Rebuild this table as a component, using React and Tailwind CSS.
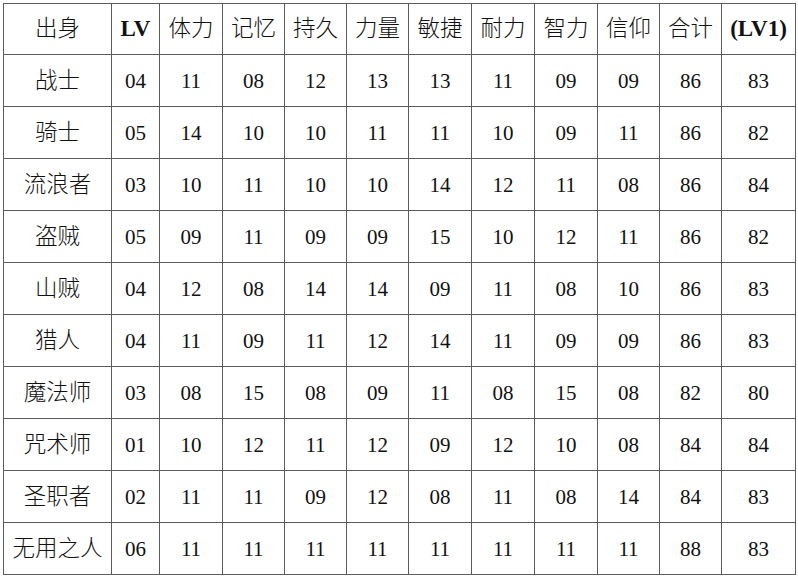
import React from "react";

const headers = ["出身", "LV", "体力", "记忆", "持久", "力量", "敏捷", "耐力", "智力", "信仰", "合计", "(LV1)"];

const rows = [
  ["战士", "04", "11", "08", "12", "13", "13", "11", "09", "09", "86", "83"],
  ["骑士", "05", "14", "10", "10", "11", "11", "10", "09", "11", "86", "82"],
  ["流浪者", "03", "10", "11", "10", "10", "14", "12", "11", "08", "86", "84"],
  ["盗贼", "05", "09", "11", "09", "09", "15", "10", "12", "11", "86", "82"],
  ["山贼", "04", "12", "08", "14", "14", "09", "11", "08", "10", "86", "83"],
  ["猎人", "04", "11", "09", "11", "12", "14", "11", "09", "09", "86", "83"],
  ["魔法师", "03", "08", "15", "08", "09", "11", "08", "15", "08", "82", "80"],
  ["咒术师", "01", "10", "12", "11", "12", "09", "12", "10", "08", "84", "84"],
  ["圣职者", "02", "11", "11", "09", "12", "08", "11", "08", "14", "84", "83"],
  ["无用之人", "06", "11", "11", "11", "11", "11", "11", "11", "11", "88", "83"],
];

const cols = "grid-cols-[108px_48px_63px_62px_62px_62px_63px_63px_63px_62px_62px_74px]";

// chinese text sits a bit larger and lighter than the digits
const isCjk = (s) => /[\u4e00-\u9fff]/.test(s);

export default function App() {
  return (
    <div className="w-[798px] h-[580px] bg-white pt-[3px] pl-[3px] font-['Liberation_Serif','Noto_Sans_CJK_SC',serif] text-[21px] text-[#111]">
      <div className={`grid ${cols} w-fit border-l border-t border-[#5c5c5c]`}>
        {headers.map((h) => (
          <div
            key={h}
            className={`h-[51px] flex items-center justify-center border-r border-b border-[#5c5c5c] ${
              isCjk(h) ? "text-[22.5px] font-light" : "text-[23px] font-bold"
            }`}
          >
            {h}
          </div>
        ))}
        {rows.map((r, ri) =>
          r.map((c, ci) => (
            <div
              key={ri + "-" + ci}
              className={`h-[52px] flex items-center justify-center border-r border-b border-[#5c5c5c] whitespace-nowrap ${
                isCjk(c) ? "text-[22.5px] font-light" : "pt-[2px]"
              }`}
            >
              {c}
            </div>
          ))
        )}
      </div>
    </div>
  );
}
